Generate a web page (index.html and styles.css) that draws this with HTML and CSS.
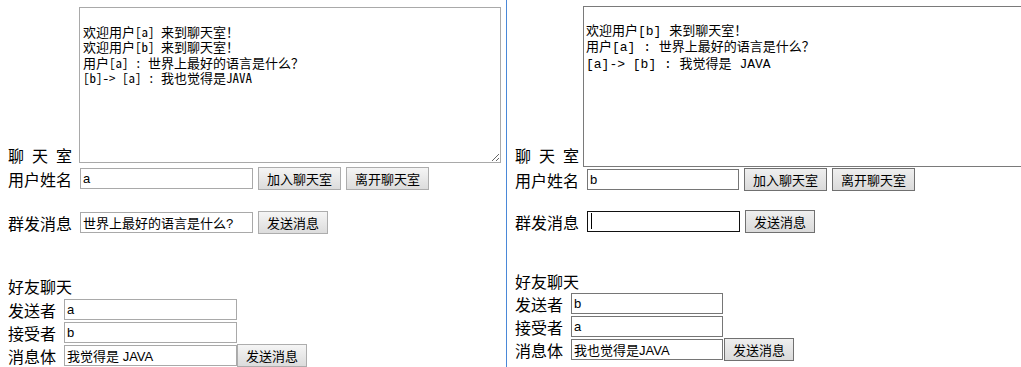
FILE: index.html
```html
<!DOCTYPE html>
<html lang="zh-CN">
<head>
<meta charset="utf-8">
<title>聊天室</title>
<link rel="stylesheet" href="styles.css">
</head>
<body>
<div class="screen">
  <section class="pane pane-ie">
    <div class="row row-room">
      <span class="label label-room"><span>聊</span><span>天</span><span>室</span></span>
      <textarea class="log" spellcheck="false">&#10;&#10;欢迎用户[a] 来到聊天室！
欢迎用户[b] 来到聊天室！
用户[a] : 世界上最好的语言是什么？
[b]-> [a] : 我也觉得是JAVA</textarea>
    </div>
    <div class="row row-user">
      <span class="label">用户姓名</span>
      <input class="field" type="text" value="a">
      <button class="btn">加入聊天室</button>
      <button class="btn">离开聊天室</button>
    </div>
    <div class="row row-group">
      <span class="label">群发消息</span>
      <input class="field" type="text" value="世界上最好的语言是什么?">
      <button class="btn">发送消息</button>
    </div>
    <div class="friend-title">好友聊天</div>
    <div class="row row-friend row-first">
      <span class="label">发送者</span>
      <input class="field" type="text" value="a">
    </div>
    <div class="row row-friend">
      <span class="label">接受者</span>
      <input class="field" type="text" value="b">
    </div>
    <div class="row row-friend">
      <span class="label">消息体</span>
      <input class="field" type="text" value="我觉得是 JAVA">
      <button class="btn">发送消息</button>
    </div>
  </section>
  <div class="divider"></div>
  <section class="pane pane-chrome">
    <div class="row row-room">
      <span class="label label-room"><span>聊</span><span>天</span><span>室</span></span>
      <textarea class="log" spellcheck="false">&#10;&#10;欢迎用户[b] 来到聊天室！
用户[a] : 世界上最好的语言是什么？
[a]-> [b] : 我觉得是 JAVA</textarea>
    </div>
    <div class="row row-user">
      <span class="label">用户姓名</span>
      <input class="field" type="text" value="b">
      <button class="btn">加入聊天室</button>
      <button class="btn">离开聊天室</button>
    </div>
    <div class="row row-group">
      <span class="label">群发消息</span>
      <span class="caret-wrap"><input class="field field-focus" type="text" value=""></span>
      <button class="btn">发送消息</button>
    </div>
    <div class="friend-title">好友聊天</div>
    <div class="row row-friend row-first">
      <span class="label">发送者</span>
      <input class="field" type="text" value="b">
    </div>
    <div class="row row-friend">
      <span class="label">接受者</span>
      <input class="field" type="text" value="a">
    </div>
    <div class="row row-friend">
      <span class="label">消息体</span>
      <input class="field" type="text" value="我也觉得是JAVA">
      <button class="btn">发送消息</button>
    </div>
  </section>
</div>
</body>
</html>
```
FILE: styles.css
```css
* {
  box-sizing: border-box;
}

html,
body {
  margin: 0;
  padding: 0;
  background: #fff;
}

body {
  width: 1021px;
  height: 367px;
  overflow: hidden;
  font-family: "Noto Sans CJK SC", "Microsoft YaHei", sans-serif;
  font-size: 16px;
  color: #000;
}

.screen {
  display: flex;
  height: 367px;
}

.pane {
  display: flex;
  flex-direction: column;
  align-items: flex-start;
  padding-left: 8px;
  overflow: hidden;
}

.pane-ie {
  width: 506px;
  flex: none;
  padding-top: 7px;
}

.divider {
  width: 1px;
  flex: none;
  background: #4a88d8;
}

.pane-chrome {
  flex: 1;
  min-width: 0;
  padding-top: 6px;
}

.row {
  display: flex;
  align-items: center;
  height: 23px;
  flex: none;
}

.row-room {
  align-items: flex-end;
  height: auto;
}

.label {
  line-height: 16px;
  white-space: nowrap;
  margin-right: 8px;
}

.label-room {
  display: flex;
  justify-content: space-between;
  width: 64px;
}

.pane-ie .label-room {
  margin-right: 7px;
}

.pane-chrome .label-room {
  margin-right: 4px;
  margin-bottom: 4px;
}

.log {
  display: block;
  margin: 0;
  color: #000;
  background: #fff;
  outline: none;
}

.pane-ie .log {
  width: 422px;
  height: 156px;
  border: 1px solid #a9a9a9;
  padding: 0 3px;
  font-family: "Noto Sans Mono CJK SC", "Liberation Mono", "Noto Sans CJK SC", monospace;
  font-size: 13px;
  line-height: 15.5px;
}

.pane-chrome .log {
  flex: none;
  width: 470px;
  height: 161px;
  border: 1px solid #7a7a7a;
  padding: 0 2px;
  font-family: "Liberation Mono", "Noto Sans CJK SC", monospace;
  font-size: 13px;
  line-height: 16.5px;
  resize: none;
}

.field {
  height: 21px;
  width: 173px;
  margin: 0;
  padding: 0 2px;
  border: 1px solid #a9a9a9;
  border-radius: 0;
  background: #fff;
  color: #000;
  font-family: "Liberation Sans", "Noto Sans CJK SC", sans-serif;
  font-size: 13px;
  line-height: 19px;
  outline: none;
}

.pane-chrome .field {
  width: 152px;
  border-color: #767676;
}

.pane-chrome .field-focus {
  width: 153px;
  border-color: #111;
}

.caret-wrap {
  position: relative;
  display: flex;
}

.caret-wrap::after {
  content: "";
  position: absolute;
  left: 4px;
  top: 2px;
  width: 1px;
  height: 16px;
  background: #000;
}

.btn {
  height: 23px;
  margin: 0 0 0 5px;
  padding: 0 8px;
  border: 1px solid #adadad;
  border-radius: 0;
  background: linear-gradient(#f5f5f5, #dcdcdc);
  color: #000;
  font-family: "Noto Sans CJK SC", "Microsoft YaHei", sans-serif;
  font-size: 13px;
  line-height: 19px;
  white-space: nowrap;
}

.pane-chrome .btn {
  border-color: #707070;
  background: linear-gradient(#efefef, #dadada);
}

.row-friend .btn {
  margin-left: 0;
}

.pane-chrome .row-friend .btn {
  margin-left: 1px;
}

.row-user {
  margin-top: 4px;
}

.row-group {
  margin-top: 21px;
}

.friend-title {
  line-height: 22px;
  margin-top: 41px;
}

.row-first {
  margin-top: 1px;
}

.pane-chrome .row-user {
  margin-top: 1px;
}

.pane-chrome .row-group {
  margin-top: 19px;
}

.pane-chrome .friend-title {
  margin-top: 37px;
}

.pane-chrome .row-first {
  margin-top: 0;
}
```
